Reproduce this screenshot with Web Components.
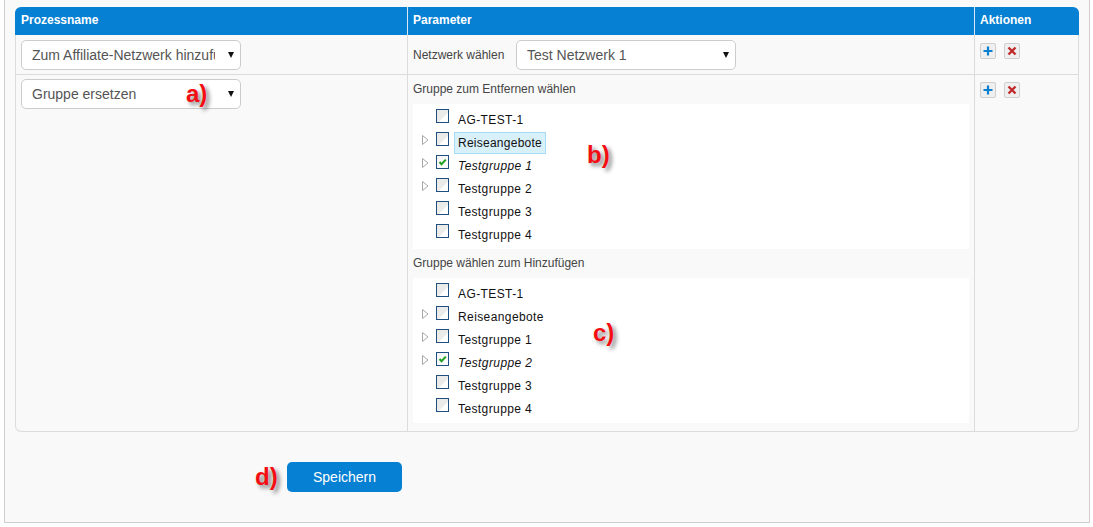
<!DOCTYPE html>
<html lang="de">
<head>
<meta charset="utf-8">
<title>Prozesse</title>
<style>
  html, body { margin: 0; background: #fff; }
  body { font-family: "Liberation Sans", Arial, sans-serif; }
</style>
</head>
<body>
<process-panel>
  <process-table>
    <process-row slot="rows">
      <pick-box slot="name" width="220">Zum Affiliate-Netzwerk hinzufügen</pick-box>
      <div slot="params" style="display:flex;align-items:center;gap:10px;padding:5px 0 4px 5px">
        <span style="font-size:12px;color:#444;width:93px">Netzwerk wählen</span>
        <pick-box width="220">Test Netzwerk 1</pick-box>
      </div>
    </process-row>
    <process-row slot="rows" last>
      <pick-box slot="name" width="220">Gruppe ersetzen</pick-box>
      <div slot="params" style="padding-bottom:8px">
        <tree-group label="Gruppe zum Entfernen wählen">
          <tree-item>AG-TEST-1</tree-item>
          <tree-item toggle active>Reiseangebote</tree-item>
          <tree-item toggle checked>Testgruppe 1</tree-item>
          <tree-item toggle>Testgruppe 2</tree-item>
          <tree-item>Testgruppe 3</tree-item>
          <tree-item>Testgruppe 4</tree-item>
        </tree-group>
        <tree-group label="Gruppe wählen zum Hinzufügen">
          <tree-item>AG-TEST-1</tree-item>
          <tree-item toggle>Reiseangebote</tree-item>
          <tree-item toggle>Testgruppe 1</tree-item>
          <tree-item toggle checked>Testgruppe 2</tree-item>
          <tree-item>Testgruppe 3</tree-item>
          <tree-item>Testgruppe 4</tree-item>
        </tree-group>
      </div>
    </process-row>
  </process-table>
  <save-button>Speichern</save-button>
  <note-mark x="186" y="80">a)</note-mark>
  <note-mark x="587" y="141">b)</note-mark>
  <note-mark x="593" y="319">c)</note-mark>
  <note-mark x="255" y="463">d)</note-mark>
</process-panel>

<script>
class ProcessPanel extends HTMLElement {
  constructor() {
    super();
    this.attachShadow({ mode: 'open' });
    this.shadowRoot.innerHTML = `
      <style>
        :host {
          display: block;
          box-sizing: border-box;
          position: relative;
          width: 1086px;
          height: 523px;
          margin-left: 4px;
          padding: 7px 10px 0 10px;
          background: #f9f9f9;
          border: 1px solid #cfcfcf;
          border-top: 0;
        }
      </style>
      <slot></slot>
    `;
  }
}

class ProcessTable extends HTMLElement {
  constructor() {
    super();
    this.attachShadow({ mode: 'open' });
    this.shadowRoot.innerHTML = `
      <style>
        :host {
          display: block;
          width: 1064px;
          border: 1px solid #dcdcdc;
          border-top: 0;
          border-radius: 6px;
          box-sizing: border-box;
        }
        .head {
          display: grid;
          grid-template-columns: 392px 567px 1fr;
          height: 28px;
          margin: 0 -1px;
          background: #0680d3;
          border-radius: 6px 6px 0 0;
          color: #fff;
          font-size: 12px;
          font-weight: bold;
          line-height: 27px;
        }
        .head div { padding-left: 6px; }
        .head div + div { border-left: 1px solid #d8e8f4; padding-left: 5px; }
      </style>
      <div class="head"><div>Prozessname</div><div>Parameter</div><div>Aktionen</div></div>
      <slot name="rows"></slot>
    `;
  }
}

class ProcessRow extends HTMLElement {
  constructor() {
    super();
    this.attachShadow({ mode: 'open' });
    this.shadowRoot.innerHTML = `
      <style>
        :host {
          display: grid;
          grid-template-columns: 391px 567px 1fr;
          border-bottom: 1px solid #dcdcdc;
        }
        :host([last]) { border-bottom: 0; }
        .name { padding: 5px 0 0 5px; }
        :host([last]) .name { padding-top: 4px; }
        .params, .actions { border-left: 1px solid #dcdcdc; }
        .actions { padding: 8px 0 0 5px; display: flex; gap: 8px; align-items: flex-start; }
        :host([last]) .actions { padding-top: 7px; }
      </style>
      <div class="name"><slot name="name"></slot></div>
      <div class="params"><slot name="params"></slot></div>
      <div class="actions">
        <icon-button kind="add"></icon-button>
        <icon-button kind="remove"></icon-button>
      </div>
    `;
  }
}

class PickBox extends HTMLElement {
  constructor() {
    super();
    this.attachShadow({ mode: 'open' });
    this.shadowRoot.innerHTML = `
      <style>
        :host {
          display: block;
          box-sizing: border-box;
          height: 30px;
          background: #fff;
          border: 1px solid #ccc;
          border-radius: 5px;
          position: relative;
          color: #555;
          font-size: 14px;
          line-height: 28px;
        }
        .text {
          display: block;
          margin: 0 25px 0 10px;
          overflow: hidden;
          white-space: nowrap;
        }
        .arrow {
          position: absolute;
          right: 6px;
          top: 11px;
          width: 0;
          height: 0;
          border: 3.5px solid transparent;
          border-top: 6px solid #111;
          border-bottom: 0;
        }
      </style>
      <span class="text"><slot></slot></span>
      <span class="arrow"></span>
    `;
  }
  connectedCallback() {
    this.style.width = this.getAttribute('width') + 'px';
  }
}

class TreeGroup extends HTMLElement {
  constructor() {
    super();
    this.attachShadow({ mode: 'open' });
    this.shadowRoot.innerHTML = `
      <style>
        :host { display: block; padding: 0 5px; }
        .label {
          height: 29px;
          font-size: 12px;
          line-height: 28px;
          color: #444;
        }
        .tree {
          background: #fff;
          padding: 4px 0 3px;
          width: 556px;
        }
      </style>
      <div class="label"></div>
      <div class="tree"><slot></slot></div>
    `;
    this.shadowRoot.querySelector('.label').textContent = this.getAttribute('label');
  }
}

class TreeItem extends HTMLElement {
  constructor() {
    super();
    this.attachShadow({ mode: 'open' });
    this.shadowRoot.innerHTML = `
      <style>
        :host {
          display: flex;
          height: 23px;
          align-items: flex-start;
          color: #111;
          font-family: "Liberation Sans", sans-serif;
          font-size: 12px;
        }
        .toggle { width: 23px; flex: none; padding-top: 4px; box-sizing: border-box; }
        .toggle svg { display: block; margin-left: 9px; visibility: hidden; }
        :host([toggle]) .toggle svg { visibility: visible; }
        .check {
          flex: none;
          box-sizing: border-box;
          width: 13px;
          height: 14px;
          margin-top: 1px;
          border: 1px solid #1e4f80;
          background: linear-gradient(135deg, #e9eae6 0%, #ececea 58%, #fff 62%);
        }
        .check svg { display: block; visibility: hidden; }
        :host([checked]) .check { background: linear-gradient(135deg, #f3f3f3, #fff); }
        :host([checked]) .check svg { visibility: visible; }
        .name {
          box-sizing: border-box;
          height: 23px;
          margin: -1px 0 0 5px;
          padding: 0 3px;
          border: 1px solid transparent;
          line-height: 25px;
          letter-spacing: 0.4px;
          white-space: nowrap;
        }
        :host([checked]) .name { font-style: italic; }
        :host([active]) .name { background: #d8f0fa; border-color: #a8dcf6; line-height: 21px; margin-top: 1px; height: 22px; letter-spacing: 0.25px; }
      </style>
      <span class="toggle">
        <svg width="7" height="10" viewBox="0 0 7 10"><path d="M.5.5 6 5 .5 9.5z" fill="#fff" stroke="#a8a8a8"/></svg>
      </span>
      <span class="check">
        <svg width="11" height="12" viewBox="0 0 11 12"><path d="M2.5 6 4.5 8.2 8.8 3.6" fill="none" stroke="#22a022" stroke-width="2"/></svg>
      </span>
      <span class="name"><slot></slot></span>
    `;
  }
}

class IconButton extends HTMLElement {
  constructor() {
    super();
    this.attachShadow({ mode: 'open' });
    const glyph = this.getAttribute('kind') === 'add'
      ? '<path d="M2.5 7h9M7 2.5v9" stroke="#0b7fd0" stroke-width="2.2" fill="none"/>'
      : '<path d="M3.5 3.5l7 7M10.5 3.5l-7 7" stroke="#c02a2a" stroke-width="2.4" fill="none"/>';
    this.shadowRoot.innerHTML = `
      <style>
        :host {
          display: block;
          box-sizing: border-box;
          width: 16px;
          height: 16px;
          background: #efefef;
          border: 1px solid #cfcfcf;
          border-radius: 2px;
        }
        svg { display: block; }
      </style>
      <svg width="14" height="14" viewBox="0 0 14 14">${glyph}</svg>
    `;
  }
}

class SaveButton extends HTMLElement {
  constructor() {
    super();
    this.attachShadow({ mode: 'open' });
    this.shadowRoot.innerHTML = `
      <style>
        :host {
          display: block;
          width: 115px;
          height: 30px;
          margin: 30px 0 0 272px;
          background: #0680d3;
          border-radius: 5px;
          color: #fff;
          font-size: 14px;
          line-height: 31px;
          text-align: center;
        }
      </style>
      <slot></slot>
    `;
  }
}

class NoteMark extends HTMLElement {
  constructor() {
    super();
    this.attachShadow({ mode: 'open' });
    this.shadowRoot.innerHTML = `
      <style>
        :host {
          position: absolute;
          color: #f40d12;
          font-size: 24px;
          font-weight: bold;
          line-height: 28px;
          text-shadow: 3px 3px 4px rgba(0,0,0,.5);
        }
      </style>
      <slot></slot>
    `;
  }
  connectedCallback() {
    // the panel starts 4px from the window edge, and has a 1px border
    this.style.left = (this.getAttribute('x') - 5) + 'px';
    this.style.top = this.getAttribute('y') + 'px';
  }
}

customElements.define('process-panel', ProcessPanel);
customElements.define('process-table', ProcessTable);
customElements.define('process-row', ProcessRow);
customElements.define('pick-box', PickBox);
customElements.define('tree-group', TreeGroup);
customElements.define('tree-item', TreeItem);
customElements.define('icon-button', IconButton);
customElements.define('save-button', SaveButton);
customElements.define('note-mark', NoteMark);
</script>
</body>
</html>
